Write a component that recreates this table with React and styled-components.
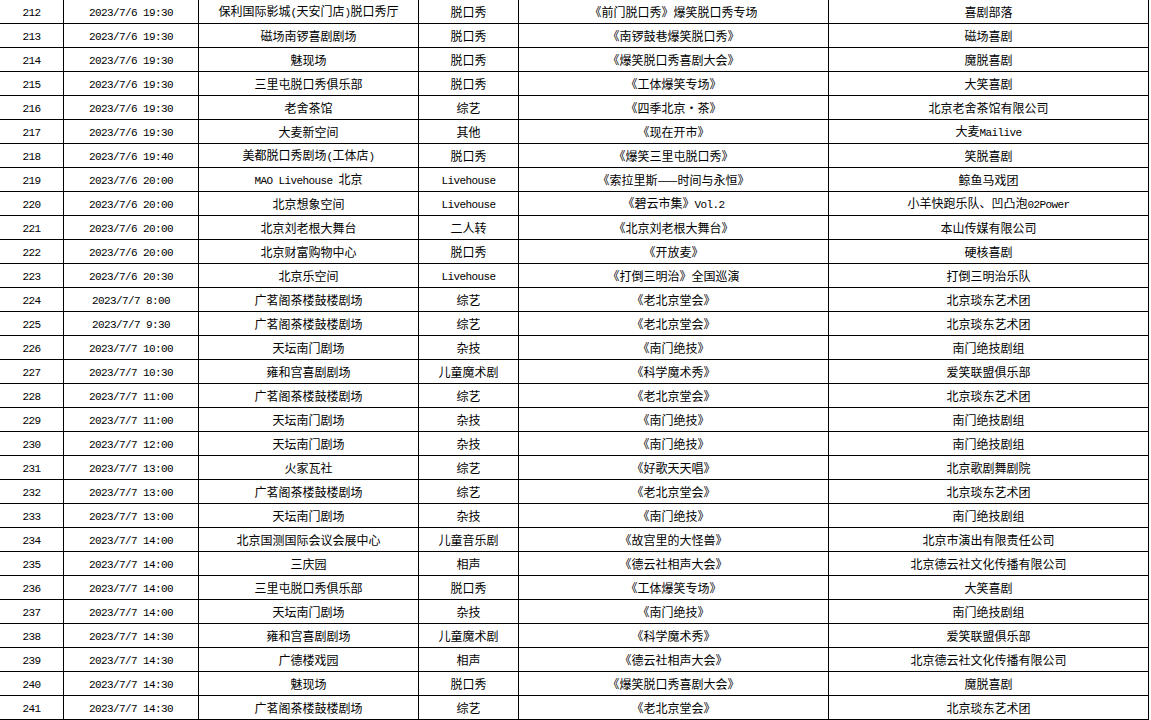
import React from "react";
import styled, { createGlobalStyle } from "styled-components";

const GlobalStyle = createGlobalStyle`
  html, body {
    margin: 0;
    padding: 0;
    background: #fff;
  }
  body {
    font-family: "Noto Sans CJK SC", "Liberation Sans", sans-serif;
    font-size: 12px;
    color: #000;
    overflow: hidden;
  }
`;

export const Sheet = styled.div`
  display: grid;
  grid-template-columns: 64px 135px 220px 100px 310px 320px;
  width: 1149px;
`;

export const Cell = styled.div`
  height: 24px;
  box-sizing: border-box;
  border-right: 1px solid #000;
  border-bottom: 1px solid #000;
  display: flex;
  align-items: center;
  justify-content: center;
  white-space: nowrap;
  overflow: hidden;
  font-size: 12px;
  line-height: 1;
  padding-top: 1px;
`;

export const CellText = styled.span`
  white-space: pre;
`;

// half-width latin in the sheet is narrow monospace, like SimSun's
export const Latin = styled.span`
  font-family: "Liberation Mono", monospace;
  font-size: 11px;
  letter-spacing: -0.6px;
`;

const rows = [
  ["212", "2023/7/6 19:30", "保利国际影城(天安门店)脱口秀厅", "脱口秀", "《前门脱口秀》爆笑脱口秀专场", "喜剧部落"],
  ["213", "2023/7/6 19:30", "磁场南锣喜剧剧场", "脱口秀", "《南锣鼓巷爆笑脱口秀》", "磁场喜剧"],
  ["214", "2023/7/6 19:30", "魅现场", "脱口秀", "《爆笑脱口秀喜剧大会》", "魔脱喜剧"],
  ["215", "2023/7/6 19:30", "三里屯脱口秀俱乐部", "脱口秀", "《工体爆笑专场》", "大笑喜剧"],
  ["216", "2023/7/6 19:30", "老舍茶馆", "综艺", "《四季北京·茶》", "北京老舍茶馆有限公司"],
  ["217", "2023/7/6 19:30", "大麦新空间", "其他", "《现在开市》", "大麦Mailive"],
  ["218", "2023/7/6 19:40", "美都脱口秀剧场(工体店)", "脱口秀", "《爆笑三里屯脱口秀》", "笑脱喜剧"],
  ["219", "2023/7/6 20:00", "MAO Livehouse 北京", "Livehouse", "《索拉里斯——时间与永恒》", "鲸鱼马戏团"],
  ["220", "2023/7/6 20:00", "北京想象空间", "Livehouse", "《碧云市集》Vol.2", "小羊快跑乐队、凹凸泡02Power"],
  ["221", "2023/7/6 20:00", "北京刘老根大舞台", "二人转", "《北京刘老根大舞台》", "本山传媒有限公司"],
  ["222", "2023/7/6 20:00", "北京财富购物中心", "脱口秀", "《开放麦》", "硬核喜剧"],
  ["223", "2023/7/6 20:30", "北京乐空间", "Livehouse", "《打倒三明治》全国巡演", "打倒三明治乐队"],
  ["224", "2023/7/7 8:00", "广茗阁茶楼鼓楼剧场", "综艺", "《老北京堂会》", "北京琰东艺术团"],
  ["225", "2023/7/7 9:30", "广茗阁茶楼鼓楼剧场", "综艺", "《老北京堂会》", "北京琰东艺术团"],
  ["226", "2023/7/7 10:00", "天坛南门剧场", "杂技", "《南门绝技》", "南门绝技剧组"],
  ["227", "2023/7/7 10:30", "雍和宫喜剧剧场", "儿童魔术剧", "《科学魔术秀》", "爱笑联盟俱乐部"],
  ["228", "2023/7/7 11:00", "广茗阁茶楼鼓楼剧场", "综艺", "《老北京堂会》", "北京琰东艺术团"],
  ["229", "2023/7/7 11:00", "天坛南门剧场", "杂技", "《南门绝技》", "南门绝技剧组"],
  ["230", "2023/7/7 12:00", "天坛南门剧场", "杂技", "《南门绝技》", "南门绝技剧组"],
  ["231", "2023/7/7 13:00", "火家瓦社", "综艺", "《好歌天天唱》", "北京歌剧舞剧院"],
  ["232", "2023/7/7 13:00", "广茗阁茶楼鼓楼剧场", "综艺", "《老北京堂会》", "北京琰东艺术团"],
  ["233", "2023/7/7 13:00", "天坛南门剧场", "杂技", "《南门绝技》", "南门绝技剧组"],
  ["234", "2023/7/7 14:00", "北京国测国际会议会展中心", "儿童音乐剧", "《故宫里的大怪兽》", "北京市演出有限责任公司"],
  ["235", "2023/7/7 14:00", "三庆园", "相声", "《德云社相声大会》", "北京德云社文化传播有限公司"],
  ["236", "2023/7/7 14:00", "三里屯脱口秀俱乐部", "脱口秀", "《工体爆笑专场》", "大笑喜剧"],
  ["237", "2023/7/7 14:00", "天坛南门剧场", "杂技", "《南门绝技》", "南门绝技剧组"],
  ["238", "2023/7/7 14:30", "雍和宫喜剧剧场", "儿童魔术剧", "《科学魔术秀》", "爱笑联盟俱乐部"],
  ["239", "2023/7/7 14:30", "广德楼戏园", "相声", "《德云社相声大会》", "北京德云社文化传播有限公司"],
  ["240", "2023/7/7 14:30", "魅现场", "脱口秀", "《爆笑脱口秀喜剧大会》", "魔脱喜剧"],
  ["241", "2023/7/7 14:30", "广茗阁茶楼鼓楼剧场", "综艺", "《老北京堂会》", "北京琰东艺术团"],
];

// split a cell's text into ascii runs and cjk runs
const MixedText = ({ text }) => (
  <CellText>
    {text.split(/([\x20-\x7e]+)/).map((part, i) =>
      /^[\x20-\x7e]+$/.test(part) ? <Latin key={i}>{part}</Latin> : part
    )}
  </CellText>
);

const App = () => {
  return (
    <>
      <GlobalStyle />
      <Sheet>
        {rows.map((row) =>
          row.map((value, col) => (
            <Cell key={row[0] + "-" + col}>
              <MixedText text={value} />
            </Cell>
          ))
        )}
      </Sheet>
    </>
  );
};

export default App;
